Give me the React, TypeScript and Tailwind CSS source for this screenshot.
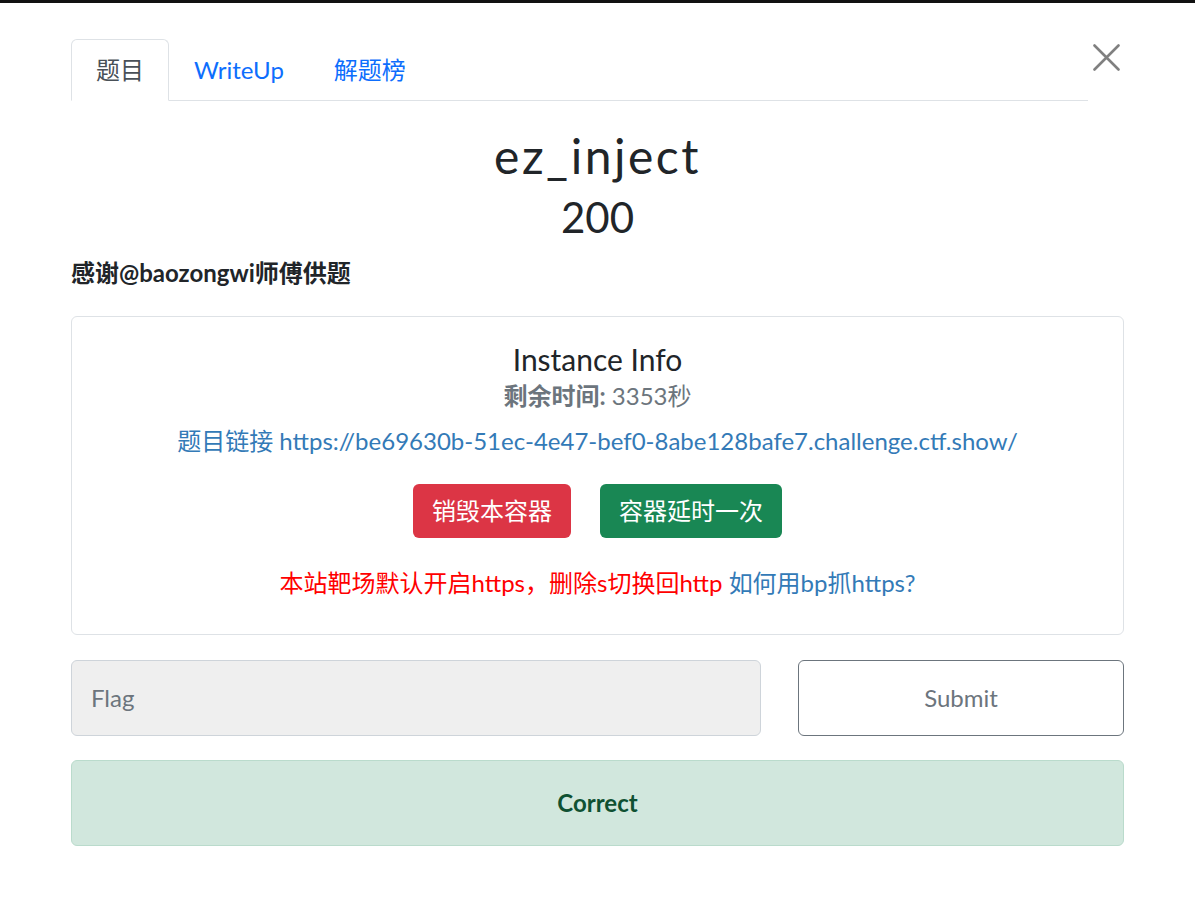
const font = "font-['Lato','Noto_Sans_CJK_SC',sans-serif]";

export default function App() {
  return (
    <div className={`${font} w-[1195px] h-[906px] bg-white text-[#212529] overflow-hidden`}>
      <div className="h-[3px] bg-[#111]" />
      <div className="px-[71px] pt-[36px]">
        {/* tabs + close */}
        <div className="flex items-start">
          <div className="flex w-[1017px] border-b border-[#dee2e6] h-[62px]">
            <div className="h-[62px] px-[24px] flex items-center border border-[#dee2e6] border-b-white rounded-t-[6px] text-[24px] text-[#495057] bg-white">
              题目
            </div>
            <div className="h-[61px] px-[25px] flex items-center text-[24px] text-[#0d6efd]">WriteUp</div>
            <div className="h-[61px] px-[25px] flex items-center text-[24px] text-[#0d6efd]">解题榜</div>
          </div>
          <svg width="27" height="27" viewBox="0 0 27 27" className="mt-[5px] ml-[5px]">
            <path d="M1.5 1.5 L25.5 25.5 M25.5 1.5 L1.5 25.5" stroke="#808080" strokeWidth="2.6" strokeLinecap="round" />
          </svg>
        </div>

        {/* title */}
        <h2 className="text-center text-[48px] leading-[1.2] tracking-[2.5px] mt-[26px]">ez_inject</h2>
        <h3 className="text-center text-[42px] leading-[1.2] mt-[7px]">200</h3>

        <p className="font-bold text-[24px] mt-[13px] leading-[36px]">感谢@baozongwi师傅供题</p>

        {/* instance card */}
        <div className="mt-[25px] border border-[#dee2e6] rounded-[6px] h-[319px] flex flex-col items-center pt-[24px]">
          <h5 className="text-[30px] leading-[36px]">Instance Info</h5>
          <h6 className="text-[24px] leading-[30px] text-[#6c757d] mt-[4px]">
            <span className="font-bold">剩余时间:</span> 3353秒
          </h6>
          <p className="text-[24px] leading-[36px] text-[#337ab7] mt-[12px]">
            题目链接 https://be69630b-51ec-4e47-bef0-8abe128bafe7.challenge.ctf.show/
          </p>
          <div className="flex gap-[29px] mt-[25px]">
            <button className="h-[54px] px-[19px] rounded-[6px] bg-[#dc3545] text-white text-[24px]">销毁本容器</button>
            <button className="h-[54px] px-[19px] rounded-[6px] bg-[#198754] text-white text-[24px]">容器延时一次</button>
          </div>
          <p className="text-[24px] leading-[36px] mt-[27px]">
            <span className="text-[#ff0000]">本站靶场默认开启https，删除s切换回http</span>{" "}
            <span className="text-[#337ab7]">如何用bp抓https?</span>
          </p>
        </div>

        {/* flag row */}
        <div className="flex mt-[25px] gap-[37px]">
          <div className="w-[690px] h-[76px] bg-[#efefef] border border-[#ced4da] rounded-[6px] flex items-center px-[19px] text-[24px] text-[#6c757d]">
            Flag
          </div>
          <button className="flex-1 h-[76px] bg-white border border-[#6c757d] rounded-[6px] text-[24px] text-[#6c757d]">
            Submit
          </button>
        </div>

        <div className="mt-[24px] h-[86px] bg-[#d1e7dd] border border-[#badbcc] rounded-[6px] flex items-center justify-center font-bold text-[24px] text-[#0f5132]">
          Correct
        </div>
      </div>
    </div>
  );
}
